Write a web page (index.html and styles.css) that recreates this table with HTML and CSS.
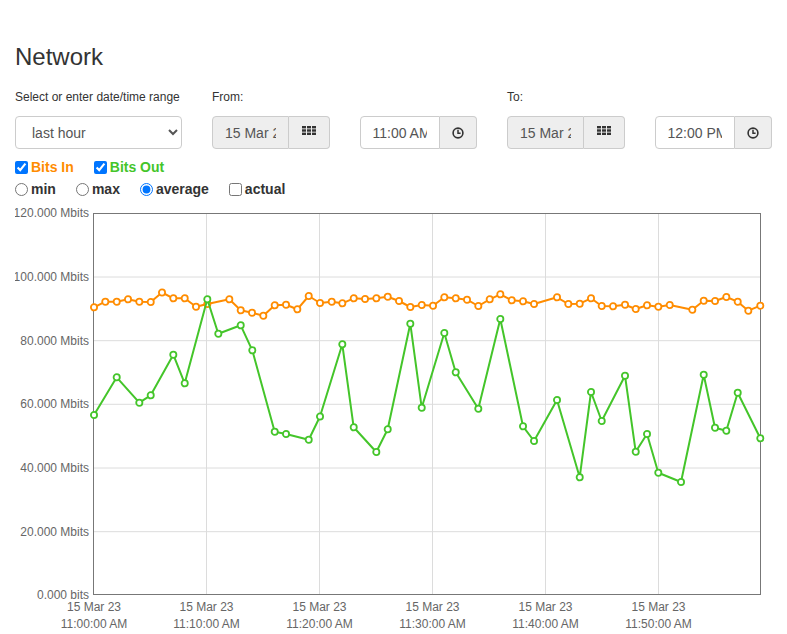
FILE: index.html
```html
<!DOCTYPE html>
<html>
<head>
<meta charset="utf-8">
<title>Network</title>
<link rel="stylesheet" href="styles.css">
</head>
<body>
<div class="page">
  <h1 class="title">Network</h1>
  <div class="controls">
    <div class="col col-range">
      <label class="lbl">Select or enter date/time range</label>
      <select class="sel"><option>last hour</option></select>
    </div>
    <div class="col">
      <label class="lbl">From:</label>
      <div class="igroup">
        <input class="inp ro" value="15 Mar 2023" readonly>
        <span class="addon addon-date">
          <svg width="14" height="9" viewBox="0 0 14 9"><g fill="#333"><rect x="0" y="0" width="4" height="2.4"/><rect x="5" y="0" width="4" height="2.4"/><rect x="10" y="0" width="4" height="2.4"/><rect x="0" y="3.3" width="4" height="2.4"/><rect x="5" y="3.3" width="4" height="2.4"/><rect x="10" y="3.3" width="4" height="2.4"/><rect x="0" y="6.6" width="4" height="2.4"/><rect x="5" y="6.6" width="4" height="2.4"/><rect x="10" y="6.6" width="4" height="2.4"/></g></svg>
        </span>
      </div>
    </div>
    <div class="col">
      <label class="lbl">&nbsp;</label>
      <div class="igroup">
        <input class="inp" value="11:00 AM">
        <span class="addon addon-time">
          <svg width="12" height="12" viewBox="0 0 12 12"><circle cx="6" cy="6" r="4.9" fill="none" stroke="#333" stroke-width="1.6"/><path d="M6 2.8V6.3H8.6" fill="none" stroke="#333" stroke-width="1.5"/></svg>
        </span>
      </div>
    </div>
    <div class="col">
      <label class="lbl">To:</label>
      <div class="igroup">
        <input class="inp ro" value="15 Mar 2023" readonly>
        <span class="addon addon-date">
          <svg width="14" height="9" viewBox="0 0 14 9"><g fill="#333"><rect x="0" y="0" width="4" height="2.4"/><rect x="5" y="0" width="4" height="2.4"/><rect x="10" y="0" width="4" height="2.4"/><rect x="0" y="3.3" width="4" height="2.4"/><rect x="5" y="3.3" width="4" height="2.4"/><rect x="10" y="3.3" width="4" height="2.4"/><rect x="0" y="6.6" width="4" height="2.4"/><rect x="5" y="6.6" width="4" height="2.4"/><rect x="10" y="6.6" width="4" height="2.4"/></g></svg>
        </span>
      </div>
    </div>
    <div class="col">
      <label class="lbl">&nbsp;</label>
      <div class="igroup">
        <input class="inp" value="12:00 PM">
        <span class="addon addon-time">
          <svg width="12" height="12" viewBox="0 0 12 12"><circle cx="6" cy="6" r="4.9" fill="none" stroke="#333" stroke-width="1.6"/><path d="M6 2.8V6.3H8.6" fill="none" stroke="#333" stroke-width="1.5"/></svg>
        </span>
      </div>
    </div>
  </div>

  <div class="opts">
    <label class="opt in"><input type="checkbox" checked>Bits In</label>
    <label class="opt out"><input type="checkbox" checked>Bits Out</label>
  </div>
  <div class="opts">
    <label class="opt"><input type="radio" name="agg">min</label>
    <label class="opt"><input type="radio" name="agg">max</label>
    <label class="opt"><input type="radio" name="agg" checked>average</label>
    <label class="opt"><input type="checkbox">actual</label>
  </div>

  <svg class="chart" width="757" height="434" viewBox="15 200 757 434">
    <defs>
      <marker id="mo" markerUnits="userSpaceOnUse" markerWidth="10" markerHeight="10" refX="5" refY="5" viewBox="0 0 10 10">
        <circle cx="5" cy="5" r="3.1" fill="#fff" stroke="#ff8c00" stroke-width="1.8"/>
      </marker>
      <marker id="mg" markerUnits="userSpaceOnUse" markerWidth="10" markerHeight="10" refX="5" refY="5" viewBox="0 0 10 10">
        <circle cx="5" cy="5" r="3.1" fill="#fff" stroke="#44c52a" stroke-width="1.8"/>
      </marker>
    </defs>
    <g class="grid">
      <line x1="94" y1="277" x2="760.5" y2="277"/>
      <line x1="94" y1="340.7" x2="760.5" y2="340.7"/>
      <line x1="94" y1="404.3" x2="760.5" y2="404.3"/>
      <line x1="94" y1="468" x2="760.5" y2="468"/>
      <line x1="94" y1="531.7" x2="760.5" y2="531.7"/>
      <line x1="206.5" y1="213" x2="206.5" y2="595"/>
      <line x1="319.5" y1="213" x2="319.5" y2="595"/>
      <line x1="432.5" y1="213" x2="432.5" y2="595"/>
      <line x1="545.5" y1="213" x2="545.5" y2="595"/>
      <line x1="658.5" y1="213" x2="658.5" y2="595"/>
    </g>
    <rect class="frame" x="93.5" y="213.5" width="667" height="381"/>
    <g class="ylab">
      <text x="89" y="217">120.000 Mbits</text>
      <text x="89" y="281">100.000 Mbits</text>
      <text x="89" y="344.7">80.000 Mbits</text>
      <text x="89" y="408.3">60.000 Mbits</text>
      <text x="89" y="472">40.000 Mbits</text>
      <text x="89" y="535.7">20.000 Mbits</text>
      <text x="89" y="599">0.000 bits</text>
    </g>
    <g class="xlab">
      <text x="94" y="611">15 Mar 23</text><text x="94" y="628">11:00:00 AM</text>
      <text x="206.5" y="611">15 Mar 23</text><text x="206.5" y="628">11:10:00 AM</text>
      <text x="319.5" y="611">15 Mar 23</text><text x="319.5" y="628">11:20:00 AM</text>
      <text x="432.5" y="611">15 Mar 23</text><text x="432.5" y="628">11:30:00 AM</text>
      <text x="545.5" y="611">15 Mar 23</text><text x="545.5" y="628">11:40:00 AM</text>
      <text x="658.5" y="611">15 Mar 23</text><text x="658.5" y="628">11:50:00 AM</text>
    </g>
    <polyline class="s-in" points="94,307.3 105.3,301.7 116.7,301.7 128,299.3 139.3,301.7 150.7,302 162,292.5 173.3,298.3 184.7,298.3 196,306.7 207.3,304 229.3,299.3 240.7,310.3 252,312.7 263.3,315.7 274.7,305.3 286,304.7 297.3,309.3 308.7,296 320,303 331.7,301.7 342.3,303.3 353.7,298.3 365,299 376.3,298.3 387.7,296.7 399,301 410.3,307 421.7,305 433,305.7 444.3,297.3 455.7,298.3 467,299.7 478.3,306 489.7,299.3 500.3,294.3 511.7,300.3 523,301.3 534,304 557,297.3 568.3,304 579.7,303.7 591,298.3 601.7,306 613,306.3 625,304.7 635.7,309 647,305.3 658.3,306.7 669.7,305 692.3,309.7 703.7,300.7 715,301 726.3,297 737.7,301.7 748.3,310.7 760.3,305.7"/>
    <polyline class="s-out" points="94,415 116.7,377.3 139.3,402.7 150.7,395.3 173.3,354.7 184.7,383.3 207.3,299.3 218.3,333.7 240.7,325.3 252.3,350.3 274.7,431.7 286,434 308.7,439.7 320,416.5 342.3,344.3 353.7,427.3 376.3,452 387.7,429.3 410.3,323.7 421.7,407.7 444.3,333 455.7,372.3 478.3,408.7 500.3,319 523,426.3 534,441 557,400 579.7,477.3 591,392 601.7,421 625,375.7 635.7,451.7 647,434 658.3,472.7 681,482 703.7,374.7 715,427.7 726.3,430.7 737.7,392.7 760.3,438.3"/>
  </svg>
</div>
</body>
</html>
```

FILE: styles.css
```css
* { box-sizing: border-box; }

body {
  margin: 0;
  background: #fff;
  font-family: "Liberation Sans", Arial, sans-serif;
  color: #333;
}

.page {
  padding: 0 15px;
  width: 787px;
}

.title {
  margin: 44px 0 0;
  font-size: 24px;
  line-height: 26.4px;
  font-weight: 400;
  color: #333;
}

.controls {
  display: flex;
  gap: 30px;
  margin-top: 18.6px;
}

.col {
  display: flex;
  flex-direction: column;
  flex: 1 1 0;
  min-width: 0;
}

.col-range {
  flex: 0 0 167px;
}

.lbl {
  font-size: 12px;
  line-height: 17px;
  height: 17px;
  margin-bottom: 10px;
  color: #333;
  white-space: nowrap;
}

.sel {
  height: 33px;
  width: 100%;
  padding: 6px 12px;
  font-family: "Liberation Sans", Arial, sans-serif;
  font-size: 14px;
  color: #555;
  background: #fff;
  border: 1px solid #ccc;
  border-radius: 4px;
}

.igroup {
  display: flex;
  height: 33px;
}

.inp {
  flex: 1 1 0;
  min-width: 0;
  height: 33px;
  padding: 6px 12px;
  font-family: "Liberation Sans", Arial, sans-serif;
  font-size: 14px;
  color: #555;
  background: #fff;
  border: 1px solid #ccc;
  border-radius: 4px 0 0 4px;
  outline: none;
}

.inp.ro {
  background: #eee;
}

.addon {
  flex: 0 0 auto;
  display: flex;
  align-items: center;
  justify-content: center;
  height: 33px;
  background: #eee;
  border: 1px solid #ccc;
  border-left: 0;
  border-radius: 0 4px 4px 0;
}

.addon-date { width: 41px; padding-bottom: 4px; }
.addon-time { width: 37px; }

.opts {
  display: flex;
  align-items: center;
  height: 22px;
}

.controls + .opts { margin-top: 7px; }

.opt {
  display: inline-flex;
  align-items: center;
  font-size: 14px;
  font-weight: bold;
  color: #333;
  margin-right: 20px;
}

.opt input {
  margin: 0 3px 0 0;
  width: 13px;
  height: 13px;
}

.opt.in { color: #ff8c00; }
.opt.out { color: #44c52a; }

.chart {
  display: block;
  font-family: "Liberation Sans", Arial, sans-serif;
}

.grid line {
  stroke: #dcdcdc;
  stroke-width: 1;
}

.frame {
  fill: none;
  stroke: #777;
  stroke-width: 1;
}

.ylab text {
  font-size: 12px;
  fill: #666;
  text-anchor: end;
}

.xlab text {
  font-size: 12px;
  fill: #666;
  text-anchor: middle;
}

.s-in {
  fill: none;
  stroke: #ff8c00;
  stroke-width: 2;
  stroke-linejoin: round;
  marker-start: url(#mo);
  marker-mid: url(#mo);
  marker-end: url(#mo);
}

.s-out {
  fill: none;
  stroke: #44c52a;
  stroke-width: 2;
  stroke-linejoin: round;
  marker-start: url(#mg);
  marker-mid: url(#mg);
  marker-end: url(#mg);
}
```
